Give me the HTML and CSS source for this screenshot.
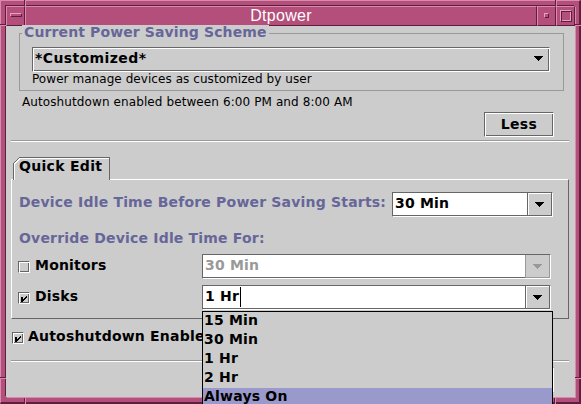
FILE: index.html
```html
<!DOCTYPE html>
<html lang="en">
<head>
<meta charset="utf-8">
<title>Dtpower</title>
<link rel="stylesheet" href="styles.css">
</head>
<body>
<div class="window">
  <span class="notch nv n-tl"></span>
  <span class="notch nv n-tr"></span>
  <span class="notch nv n-bl"></span>
  <span class="notch nv n-br"></span>
  <span class="notch nh n-lt"></span>
  <span class="notch nh n-lb"></span>
  <span class="notch nh n-rt"></span>
  <span class="notch nh n-rb"></span>
  <div class="inner">
    <div class="titlebar">
      <div class="tb menu"><span class="menubar"></span></div>
      <div class="tb title">Dtpower</div>
      <div class="tb wbtn"><span class="minsq"></span></div>
      <div class="tb wbtn"><span class="maxsq"></span></div>
    </div>
    <div class="content">
      <div class="group">
        <span class="legend">Current Power Saving Scheme</span>
        <div class="combo f3d">
          <span class="ctext">*Customized*</span>
          <svg class="arr" width="9" height="5" viewBox="0 0 9 5"><path d="M0 0H9L4.5 5Z"/></svg>
        </div>
        <div class="desc">Power manage devices as customized by user</div>
      </div>
      <div class="autotext">Autoshutdown enabled between 6:00 PM and 8:00 AM</div>
      <div class="lessrow"><div class="btn f3d">Less</div></div>
      <div class="sep"></div>
      <div class="tabs">
        <div class="tabstrip"><div class="tab">Quick Edit</div></div>
        <div class="panel">
          <div class="row1">
            <span class="blabel l1">Device Idle Time Before Power Saving Starts:</span>
            <div class="ecombo w1">
              <div class="field">30 Min</div>
              <div class="ebtn"><svg class="arr" width="9" height="5" viewBox="0 0 9 5"><path d="M0 0H9L4.5 5Z"/></svg></div>
            </div>
          </div>
          <div class="blabel l2">Override Device Idle Time For:</div>
          <div class="crow r3">
            <span class="cb f3d"></span>
            <span class="clabel">Monitors</span>
            <div class="ecombo w2 disabled">
              <div class="field">30 Min</div>
              <div class="ebtn"><svg class="arr" width="9" height="5" viewBox="0 0 9 5"><path d="M0 0H9L4.5 5Z"/></svg></div>
            </div>
          </div>
          <div class="crow r4">
            <span class="cb f3d"><svg class="chk" width="10" height="10" viewBox="0 0 10 10"><rect x="2" y="4" width="2" height="5"/><path d="M4 6L8 2L8 4L4 8Z"/></svg></span>
            <span class="clabel">Disks</span>
            <div class="ecombo w2 open">
              <div class="field">1 Hr<span class="caret"></span></div>
              <div class="ebtn"><svg class="arr" width="9" height="5" viewBox="0 0 9 5"><path d="M0 0H9L4.5 5Z"/></svg></div>
              <div class="popup">
                <div class="item">15 Min</div>
                <div class="item">30 Min</div>
                <div class="item">1 Hr</div>
                <div class="item">2 Hr</div>
                <div class="item sel">Always On</div>
              </div>
            </div>
          </div>
        </div>
      </div>
      <div class="autorow">
        <span class="cb f3d"><svg class="chk" width="10" height="10" viewBox="0 0 10 10"><rect x="2" y="4" width="2" height="5"/><path d="M4 6L8 2L8 4L4 8Z"/></svg></span>
        <span class="clabel">Autoshutdown Enabled</span>
      </div>
      <div class="sep sep2"></div>
      <div class="btnrow">
        <div class="btn f3d">OK</div>
        <div class="btn f3d">Apply</div>
        <div class="btn f3d">Cancel</div>
        <div class="btn f3d">Help</div>
      </div>
    </div>
  </div>
</div>
</body>
</html>
```

FILE: styles.css
```css
* { box-sizing: border-box; }
html, body { margin: 0; padding: 0; }
body {
  width: 581px;
  height: 404px;
  overflow: hidden;
  background: #b44e7a;
  font-family: "DejaVu Sans", sans-serif;
  color: #000;
}

/* ---------- CDE window frame ---------- */
.window {
  position: relative;
  width: 581px;
  height: 404px;
  background: #b44e7a;
  border-style: solid;
  border-width: 1px 2px 2px 1px;
  border-color: #d98bad #5e1f3e #5e1f3e #d98bad;
  padding: 5px 4px 5px 5px;
}
.notch { position: absolute; z-index: 1; }
.nv { width: 2px; height: 6px; border-left: 1px solid #5e1f3e; border-right: 1px solid #d98bad; }
.nh { width: 6px; height: 2px; border-top: 1px solid #5e1f3e; border-bottom: 1px solid #d98bad; }
.n-tl { left: 23px; top: -1px; }
.n-tr { left: 554px; top: -1px; }
.n-bl { left: 23px; bottom: -2px; }
.n-br { left: 553px; bottom: -2px; }
.n-lt { left: -1px; top: 23px; }
.n-lb { left: -1px; top: 376px; }
.n-rt { right: -2px; top: 23px; }
.n-rb { right: -2px; top: 376px; }

.inner {
  height: 391px;
  display: flex;
  flex-direction: column;
  box-shadow: -1px -1px 0 #5e1f3e, 1px 1px 0 #d98bad;
}
.titlebar { display: flex; height: 20px; }
.tb {
  height: 20px;
  background: #b44e7a;
  border: 1px solid;
  border-color: #d98bad #5e1f3e #5e1f3e #d98bad;
}
.menu, .wbtn {
  width: 19px;
  display: flex;
  align-items: center;
  justify-content: center;
}
.menubar {
  width: 12px;
  height: 4px;
  border: 1px solid;
  border-color: #e3a2be #5e1f3e #5e1f3e #e3a2be;
  margin-top: -3px;
}
.minsq {
  width: 5px;
  height: 5px;
  border: 1px solid;
  border-color: #e3a2be #5e1f3e #5e1f3e #e3a2be;
  margin-top: -2px;
}
.maxsq {
  width: 12px;
  height: 12px;
  border: 1px solid;
  border-color: #e3a2be #5e1f3e #5e1f3e #e3a2be;
  box-shadow: inset 1px 1px 0 #5e1f3e, inset -1px -1px 0 #e3a2be;
}
.title {
  flex: 1;
  color: #fff;
  font-family: "Liberation Sans", Arial, sans-serif;
  font-size: 16px;
  line-height: 18px;
  text-align: center;
  letter-spacing: 0.3px;
}

/* ---------- dialog content ---------- */
.content {
  flex: 1;
  position: relative;
  background: #cccccc;
  display: flex;
  flex-direction: column;
}
.f3d {
  background: #cccccc;
  border: 1px solid;
  border-color: #666666 #ffffff #ffffff #666666;
  box-shadow: inset 1px 1px 0 #ffffff, inset -1px -1px 0 #666666;
}
.arr { display: block; fill: #000; }
.arr path { shape-rendering: crispEdges; }

.group {
  position: relative;
  margin: 7px 11px 0 13px;
  border: 1px solid #999999;
  padding: 13px 13px 4px 12px;
}
.legend {
  position: absolute;
  top: -9px;
  left: 2px;
  padding: 0 2px;
  background: #cccccc;
  color: #666699;
  font-weight: bold;
  font-size: 14px;
  line-height: 15px;
  letter-spacing: 0.12px;
  white-space: nowrap;
}
.combo {
  height: 25px;
  display: flex;
  align-items: center;
  justify-content: space-between;
  padding: 0 6px 3px 2px;
}
.ctext { font-weight: bold; font-size: 14px; line-height: 16px; letter-spacing: 0.4px; }
.desc { font-size: 12px; line-height: 14px; letter-spacing: 0.06px; white-space: nowrap; }

.autotext {
  margin: 4px 0 0 16px;
  font-size: 12px;
  line-height: 14px;
  letter-spacing: 0.1px;
  white-space: nowrap;
}
.lessrow { display: flex; justify-content: flex-end; margin: 3px 21px 0 0; }
.btn {
  width: 70px;
  height: 25px;
  display: flex;
  align-items: center;
  justify-content: center;
  padding-bottom: 1px;
  font-weight: bold;
  font-size: 14px;
  line-height: 16px;
  letter-spacing: 0.3px;
}
.sep {
  margin: 3px 6px 0 5px;
  height: 2px;
  border-top: 1px solid #999999;
  border-bottom: 1px solid #ffffff;
}
.sep2 { margin-top: 16px; }

/* ---------- tabbed pane ---------- */
.tabs { margin: 15px 6px 0 5px; }
.tabstrip { display: flex; padding-left: 2px; height: 22px; }
.tab {
  position: relative;
  z-index: 1;
  width: 97px;
  height: 23px;
  margin-bottom: -1px;
  background: #cccccc;
  border: 1px solid #666666;
  border-bottom: 0;
  box-shadow: inset 1px 1px 0 #ffffff;
  padding: 0 0 5px 5px;
  font-weight: bold;
  font-size: 14px;
  line-height: 17px;
  letter-spacing: 0.3px;
  white-space: nowrap;
}
.tab::before {
  content: "";
  position: absolute;
  top: -1px;
  left: -1px;
  width: 7px;
  height: 7px;
  background: linear-gradient(to bottom right, #cccccc 0, #cccccc 44%, #666666 44%, #666666 56%, #ffffff 56%, #ffffff 68%, transparent 68%);
}
.panel {
  border: 1px solid;
  border-color: #ffffff #666666 #666666 #ffffff;
  padding: 12px 15px 8px 7px;
}
.blabel {
  color: #666699;
  font-weight: bold;
  font-size: 14px;
  line-height: 16px;
  letter-spacing: 0.19px;
  white-space: nowrap;
}
.row1 {
  display: flex;
  justify-content: space-between;
  align-items: flex-start;
  height: 25px;
}
.l1 { margin-top: 2px; }
.l2 { display: block; margin-top: 13px; }

.ecombo {
  position: relative;
  height: 25px;
  display: flex;
  border: 1px solid;
  border-color: #666666 #ffffff #ffffff #666666;
}
.w1 { width: 161px; }
.w2 { width: 349px; margin-left: auto; margin-right: 2px; }
.field {
  flex: 1;
  display: flex;
  align-items: center;
  background: #ffffff;
  border-bottom: 1px solid #666666;
  padding: 0 0 3px 2px;
  font-weight: bold;
  font-size: 14px;
  line-height: 16px;
  letter-spacing: 0.2px;
  white-space: nowrap;
}
.ebtn {
  width: 25px;
  display: flex;
  align-items: center;
  justify-content: center;
  background: #cccccc;
  border: 1px solid #666666;
  border-top: 0;
  box-shadow: inset 1px 1px 0 #ffffff;
}
.disabled .field { color: #999999; }
.disabled .ebtn { border-color: #999999; box-shadow: none; }
.disabled .arr { fill: #999999; }
.caret {
  align-self: flex-start;
  width: 1px;
  height: 20px;
  margin: 1px 0 0 1px;
  background: #000;
}

.crow {
  display: flex;
  align-items: center;
  height: 25px;
  margin-top: 8px;
}
.r4 { margin-top: 6px; }
.cb {
  width: 12px;
  height: 12px;
  flex: none;
  display: block;
  position: relative;
}
.crow .cb { margin-left: -1px; }
.chk { position: absolute; left: 0; top: 0; fill: #000; shape-rendering: crispEdges; }
.clabel {
  font-weight: bold;
  font-size: 14px;
  line-height: 16px;
  letter-spacing: 0.2px;
  margin: 0 0 3px 5px;
  white-space: nowrap;
}

.popup {
  position: absolute;
  z-index: 5;
  top: 25px;
  left: -1px;
  width: 351px;
  background: #cccccc;
  border: 1px solid #000;
  border-bottom: 0;
}
.item {
  height: 19px;
  padding: 0 0 2px 1px;
  font-weight: bold;
  font-size: 14px;
  line-height: 17px;
  letter-spacing: 0.2px;
  white-space: nowrap;
}
.item.sel { background: #9999cc; }

.autorow {
  display: flex;
  align-items: center;
  height: 12px;
  margin: 13px 0 0 6px;
}
.autorow .clabel { margin: 0 0 5px 4px; }

.btnrow {
  display: flex;
  justify-content: flex-end;
  gap: 5px;
  margin: 5px 21px 0 0;
}
```
